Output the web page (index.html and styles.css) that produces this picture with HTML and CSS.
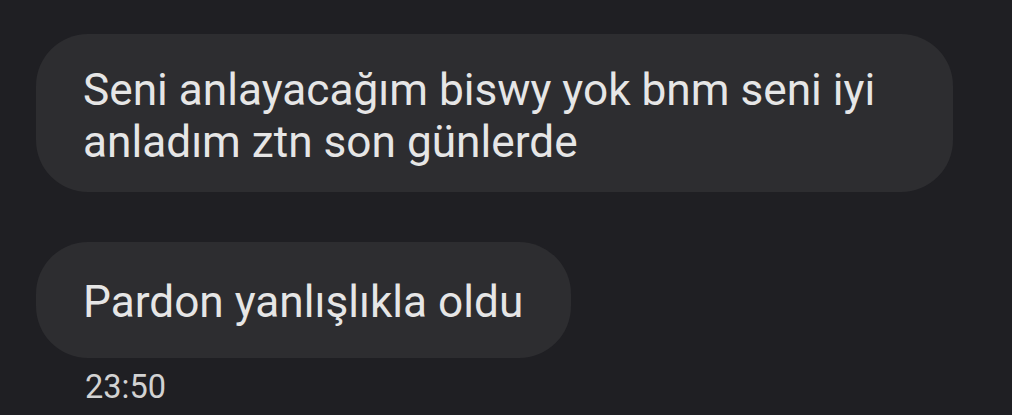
FILE: index.html
```html
<!DOCTYPE html>
<html lang="tr">
<head>
<meta charset="utf-8">
<link rel="stylesheet" href="styles.css">
</head>
<body>
<div class="chat">
  <div class="bubble bubble-multi">Seni anlayacağım biswy yok bnm seni iyi anladım ztn son günlerde</div>
  <div class="bubble bubble-single">Pardon yanlışlıkla oldu</div>
  <div class="time">23:50</div>
</div>
</body>
</html>
```
FILE: styles.css
```css
html, body {
  margin: 0;
  padding: 0;
  background: #1f1f23;
  height: 100%;
  overflow: hidden;
}
.chat {
  display: flex;
  flex-direction: column;
  align-items: flex-start;
  padding: 34px 0 0 36px;
  font-family: Roboto, "Noto Sans", sans-serif;
  color: #e6e6e6;
}
.bubble {
  box-sizing: border-box;
  max-width: 917px;
  background: #2d2d30;
  border-radius: 52px;
  font-size: 44.2px;
  line-height: 52px;
  padding: 30px 47px 24px 47px;
}
.bubble-single {
  margin-top: 50px;
  padding: 34px 48px 30px 47px;
}
.time {
  font-size: 32.5px;
  line-height: 36px;
  color: #d2d2d2;
  margin: 11px 0 0 49px;
}
```
